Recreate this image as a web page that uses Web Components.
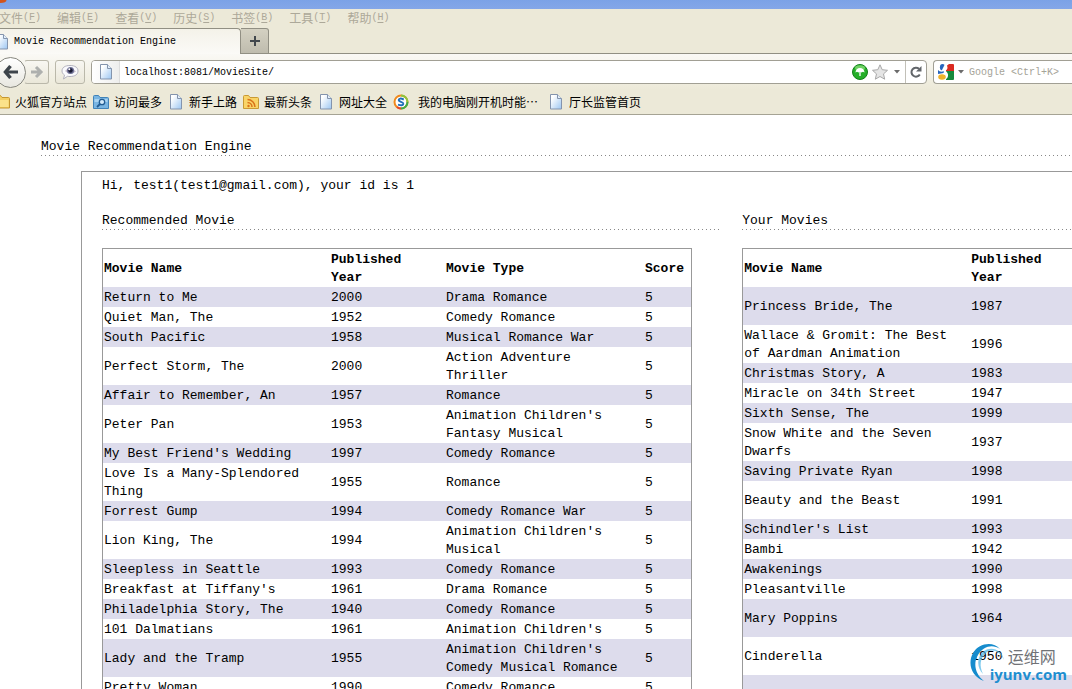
<!DOCTYPE html>
<html lang="zh-CN">
<head>
<meta charset="utf-8">
<title>Movie Recommendation Engine</title>
<style>
  html, body { margin: 0; height: 100%; }
  body {
    overflow: hidden; background: #fff; color: #000;
    font: 13px/18px "Liberation Mono", "Noto Sans CJK SC", monospace;
  }
</style>
</head>
<body>
<app-window></app-window>
<script>
const ICONS = {
  page: `<svg width="16" height="16" viewBox="0 0 16 16"><defs><linearGradient id="g" x1="0" y1="0" x2="1" y2="1"><stop offset=".2" stop-color="#fff"/><stop offset="1" stop-color="#9cc6f2"/></linearGradient></defs><path d="M2.500 .5h7l4 4v10.500h-11z" fill="url(#g)" stroke="#8494ad"/><path d="M9.500 .5v4h4" fill="#e4effb" stroke="#8494ad"/></svg>`,
  folder: `<svg width="16" height="16" viewBox="0 0 16 16"><path d="M.5 14V2.500q0-1 1-1h5l1.500 2h6.500q1 0 1 1v9.500z" fill="#f4cf62" stroke="#c59630"/><path d="M1.500 6h13v7h-13z" fill="#fbe28a"/></svg>`,
  search: `<svg width="16" height="16" viewBox="0 0 16 16"><path d="M.5 14.500V2.500q0-1 1-1h4l1.500 2h7.500q1 0 1 1v10z" fill="#79b5e2" stroke="#4183b8"/><path d="M1.500 5h13v3h-13z" fill="#a8d3f2"/><circle cx="9" cy="8" r="2.700" fill="#d4ebfb" stroke="#225d93" stroke-width="1.300"/><path d="M7 10l-3 3" stroke="#225d93" stroke-width="1.800"/></svg>`,
  feed: `<svg width="16" height="16" viewBox="0 0 16 16"><path d="M.5 14.500V2.500q0-1 1-1h4l1.500 2h7.500q1 0 1 1v10z" fill="#f9d468" stroke="#c99a34"/><circle cx="5.500" cy="12" r="1.200" fill="#d9731a"/><path d="M4.500 8.500a4.500 4.500 0 0 1 4.500 4.500M4.500 5.500a7.500 7.500 0 0 1 7.500 7.500" fill="none" stroke="#d9731a" stroke-width="1.500"/></svg>`,
  sogou: `<svg width="16" height="16" viewBox="0 0 16 16" fill="none"><circle cx="8" cy="8" r="6.500" fill="#fff" stroke="#f08a1c" stroke-width="2"/><path d="M8 1.500A6.500 6.500 0 0 1 14.500 8" stroke="#8cc63e" stroke-width="2"/><path d="M14.500 8A6.500 6.500 0 0 1 8 14.500" stroke="#3fae49" stroke-width="2"/><path d="M4 13A6.500 6.500 0 0 0 8 14.500" stroke="#e2452c" stroke-width="2"/><path d="M10.800 5.500Q6 3.500 5.700 6C5.500 8 10.500 7.700 10.300 9.900Q10 12.300 5 10.600" stroke="#1f6fb8" stroke-width="2"/></svg>`,
  back: `<svg width="18" height="18" viewBox="0 0 18 18" fill="none" stroke="#3d444b"><path d="M8.500 3L3.500 9l5 6" stroke-width="3.500"/><path d="M4 9h12" stroke-width="3"/></svg>`,
  forward: `<svg width="14" height="16" viewBox="0 0 14 16" fill="none" stroke="#aeb0ae" stroke-width="3"><path d="M6 3l5 5-5 5M1 8h9"/></svg>`,
  eye: `<svg width="18" height="16" viewBox="0 0 18 16"><path d="M9 1.500c5 0 8 2 8 5.500s-3 5.500-8 5.500c-1 0-1.500 0-2.500-.2L2.500 15l1-4C2 10 1 8.800 1 7c0-3.500 3-5.500 8-5.500z" fill="#fafafd" stroke="#b3b2bd"/><path d="M4 7Q9 1 15 7.500 9 12 4 7z" fill="#c3bbc9"/><circle cx="9.500" cy="6.500" r="3.500" fill="#6d7096"/><circle cx="9.500" cy="6.500" r="2.200" fill="#1b1c34"/><circle cx="8.300" cy="5.200" r="1" fill="#fff"/></svg>`,
  umbrella: `<svg width="16" height="16" viewBox="0 0 16 16"><circle cx="8" cy="8" r="7.500" fill="#25ae28" stroke="#128018"/><ellipse cx="8" cy="4" rx="5" ry="2.800" fill="#8ee07e" opacity=".7"/><path d="M3.500 8.500a4.500 4.500 0 0 1 9 0l-1.500-.7-1.500.7L8 7.800l-1.500.7-1.500-.7z" fill="#fff"/><path d="M8 7v5" stroke="#fff" stroke-width="1.300"/></svg>`,
  star: `<svg width="16" height="16" viewBox="0 0 16 16"><path d="M8 .8l2.200 4.900 5.300.6-4 3.600 1.200 5.300L8 12.500l-4.700 2.700 1.200-5.300-4-3.600 5.300-.6z" fill="#e5e5e5" stroke="#a8a8a8"/></svg>`,
  caret: `<svg width="6" height="4" viewBox="0 0 6 4"><path d="M0 0h6L3 3.500z" fill="#6b6b6b"/></svg>`,
  reload: `<svg width="14" height="14" viewBox="0 0 14 14"><path d="M10 3.800A4.500 4.500 0 1 0 10.800 9.500" fill="none" stroke="#62666a" stroke-width="2"/><path d="M12.500 1v5.500H7z" fill="#62666a"/></svg>`,
  google: `<svg width="16" height="16" viewBox="0 0 16 16"><path d="M0 0h9v16H0z" fill="#fff"/><path d="M8 0h7q1 0 1 1v6H8z" fill="#da2a20"/><path d="M8 7h8v8q0 1-1 1H8z" fill="#168a3d"/><ellipse cx="4.500" cy="3.200" rx="2.600" ry="3.200" fill="#2765bd"/><path d="M7 0h4L9 1.500Q10.500 5 7.500 6.500L9.500 9q1.500 3-1 6L5 9.500 3 8z" fill="#fff"/><path d="M0 6q2 2.500 6 1.200L5.500 9 0 10z" fill="#2765bd"/><ellipse cx="4" cy="13" rx="3.800" ry="2.700" fill="#eeb32c"/></svg>`,
  plus: `<svg width="12" height="12" viewBox="0 0 12 12"><path d="M6 1v10M1 6h10" stroke="#41474c" stroke-width="2"/></svg>`,
  fox: `<svg width="7" height="9" viewBox="0 0 7 9"><path d="M0 0h6.500q0 3-6.500 3z" fill="#d2541c"/></svg>`
};

function define(name, render) {
  customElements.define(name, class extends HTMLElement {
    connectedCallback() {
      if (this.shadowRoot) return;
      const t = document.createElement('template');
      t.innerHTML = render(this);
      this.attachShadow({ mode: 'open' }).append(t.content.cloneNode(true));
    }
  });
}

define('ui-icon', el => `<style>:host{display:inline-flex;flex:none} svg{display:block}</style>${ICONS[el.getAttribute('name')]}`);

define('menu-bar', () => `
<style>
  :host { display: block; background: #ece9d8; height: 19px; }
  nav { display: flex; gap: 16px; margin-left: -1px; align-items: center; }
  button { display: flex; align-items: center; border: 0; padding: 0; background: none; color: #aca899; font: 12px/18px "Noto Sans CJK SC", sans-serif; white-space: nowrap; }
  span { font: 10px/18px "Liberation Mono", monospace; }
  u { text-underline-offset: 2px; }
</style>
<nav>${[['文件','F'],['编辑','E'],['查看','V'],['历史','S'],['书签','B'],['工具','T'],['帮助','H']]
  .map(([t, k]) => `<button>${t}<span>(<u>${k}</u>)</span></button>`).join('')}</nav>`);

define('tab-strip', () => `
<style>
  :host { display: flex; height: 26px; background: #ece9d8; }
  button { font: 10px/18px "Liberation Mono", monospace; color: #000; padding: 0; display: flex; align-items: center; }
  .tab { box-sizing: border-box; width: 241px; gap: 4px; padding-top: 1px; border: solid #918f83; border-width: 1px 1px 0 0; border-radius: 0 4px 0 0; background: linear-gradient(#f4f2e9, #fbfaf7); white-space: nowrap; }
  ui-icon { margin-left: -6px; }
  .add { box-sizing: border-box; width: 28px; justify-content: center; border: 1px solid #918f83; border-left: 0; border-radius: 0 3px 0 0; background: linear-gradient(#d4d1c2, #bfbcae); }
  .add ui-icon { margin: 0; }
  .rest { flex: 1; border-bottom: 1px solid #918f83; }
</style>
<button class="tab"><ui-icon name="page"></ui-icon>Movie Recommendation Engine</button>
<button class="add" aria-label="New tab"><ui-icon name="plus"></ui-icon></button>
<div class="rest"></div>`);

define('nav-bar', () => `
<style>
  :host { display: flex; align-items: center; height: 36px; background: linear-gradient(#faf9f5, #ece9d8); }
  button { padding: 0; display: flex; align-items: center; justify-content: center; border: 0; background: none; flex: none; }
  .back { box-sizing: border-box; width: 31px; height: 31px; margin-left: -5px; border: 1px solid #87877f; border-radius: 50%; background: linear-gradient(#fff, #e8e7e0); position: relative; }
  .fwd, .eye { box-sizing: border-box; height: 24px; border: 1px solid #bab8aa; border-radius: 3px; background: linear-gradient(#f8f7f2, #eae7d9); margin-right: 6px; }
  .fwd { width: 25px; margin-left: -2px; border-left-color: transparent; }
  .eye { width: 30px; }
  .url, .find { box-sizing: border-box; height: 24px; border: 1px solid #a19f94; background: #fff; display: flex; align-items: center; border-radius: 4px; overflow: hidden; }
  .url { flex: 1; min-width: 0; margin-right: 6px; }
  .site { width: 28px; height: 100%; background: linear-gradient(90deg, #fff, #eeeeed); border-right: 1px solid #ddd; }
  input { border: 0; outline: 0; padding: 1px 0 0; background: none; min-width: 0; flex: 1; font: 10px/18px "Liberation Mono", monospace; color: #000; }
  .url input { margin-left: 4px; }
  .drop { margin: 0 5px 0 6px; }
  .find .drop { margin: 0 5px 0 4px; }
  .star { margin-left: 4px; }
  .reload { width: 21px; height: 100%; border-left: 1px solid #c2c0b8; }
  .find { width: 139px; border-right: 0; border-radius: 4px 0 0 4px; padding-left: 4px; }
  input::placeholder { color: #a5a398; opacity: 1; }
</style>
<button class="back" aria-label="Back"><ui-icon name="back"></ui-icon></button>
<button class="fwd" aria-label="Forward"><ui-icon name="forward"></ui-icon></button>
<button class="eye" aria-label="Preview"><ui-icon name="eye"></ui-icon></button>
<div class="url">
  <button class="site" aria-label="Site information"><ui-icon name="page"></ui-icon></button>
  <input aria-label="Address" value="localhost:8081/MovieSite/">
  <ui-icon name="umbrella"></ui-icon>
  <button class="star" aria-label="Bookmark"><ui-icon name="star"></ui-icon></button>
  <button class="drop" aria-label="History"><ui-icon name="caret"></ui-icon></button>
  <button class="reload" aria-label="Reload"><ui-icon name="reload"></ui-icon></button>
</div>
<div class="find">
  <ui-icon name="google"></ui-icon>
  <button class="drop" aria-label="Search engine"><ui-icon name="caret"></ui-icon></button>
  <input aria-label="Search" placeholder="Google &lt;Ctrl+K&gt;">
</div>`);

define('bookmark-bar', () => `
<style>
  :host { display: block; background: #ece9d8; border-bottom: 1px solid #a5a394; }
  nav { display: flex; gap: 6px; align-items: center; height: 24px; margin-left: -6px; }
  a { display: flex; gap: 5px; align-items: center; color: #000; text-decoration: none; white-space: nowrap; font: 12px/18px "Noto Sans CJK SC", sans-serif; }
  .spaced span { padding: 0 4px; }
</style>
<nav>${[['folder','火狐官方站点'],['search','访问最多'],['page','新手上路'],['feed','最新头条'],['page','网址大全'],['sogou','我的电脑刚开机时能⋯'],['page','厅长监管首页']]
  .map(([i, t]) => `<a href="#"${i === 'sogou' ? ' class="spaced"' : ''}><ui-icon name="${i}"></ui-icon><span>${t}</span></a>`).join('')}</nav>`);

define('section-title', () => `
<style>
  :host { display: block; }
  h2 { margin: 0; font: inherit; background: repeating-linear-gradient(90deg, #888 0 1px, transparent 1px 4px) bottom / 100% 1px no-repeat; }
</style><h2><slot></slot></h2>`);

const LISTS = {
  recommended: [
    ['Return to Me', 2000, 'Drama Romance'],
    ['Quiet Man, The', 1952, 'Comedy Romance'],
    ['South Pacific', 1958, 'Musical Romance War'],
    ['Perfect Storm, The', 2000, 'Action Adventure Thriller'],
    ['Affair to Remember, An', 1957, 'Romance'],
    ['Peter Pan', 1953, "Animation Children's Fantasy Musical"],
    ["My Best Friend's Wedding", 1997, 'Comedy Romance'],
    ['Love Is a Many-Splendored Thing', 1955, 'Romance'],
    ['Forrest Gump', 1994, 'Comedy Romance War'],
    ['Lion King, The', 1994, "Animation Children's Musical"],
    ['Sleepless in Seattle', 1993, 'Comedy Romance'],
    ["Breakfast at Tiffany's", 1961, 'Drama Romance'],
    ['Philadelphia Story, The', 1940, 'Comedy Romance'],
    ['101 Dalmatians', 1961, "Animation Children's"],
    ['Lady and the Tramp', 1955, "Animation Children's Comedy Musical Romance"],
    ['Pretty Woman', 1990, 'Comedy Romance']
  ],
  // A third value of true marks a row of two lines' height.
  yours: [
    ['Princess Bride, The', 1987, true],
    ['Wallace & Gromit: The Best of Aardman Animation', 1996],
    ['Christmas Story, A', 1983],
    ['Miracle on 34th Street', 1947],
    ['Sixth Sense, The', 1999],
    ['Snow White and the Seven Dwarfs', 1937],
    ['Saving Private Ryan', 1998],
    ['Beauty and the Beast', 1991, true],
    ["Schindler's List", 1993],
    ['Bambi', 1942],
    ['Awakenings', 1990],
    ['Pleasantville', 1998],
    ['Mary Poppins', 1964, true],
    ['Cinderella', 1950, true],
    ['', '', true]
  ]
};

define('movie-table', el => {
  const full = el.getAttribute('list') === 'recommended';
  const esc = s => String(s).replace('&', '&amp;');
  const rows = LISTS[el.getAttribute('list')].map(([name, year, extra]) => full
    ? `<tr><td>${esc(name)}</td><td>${year}</td><td>${extra}</td><td>5</td></tr>`
    : `<tr${extra ? ' class="tall"' : ''}><td>${esc(name)}</td><td>${year}</td><td></td></tr>`).join('');
  return `
<style>
  :host { display: block; }
  table { width: 590px; box-sizing: border-box; table-layout: fixed; border: 1px solid #999; border-spacing: 0; }
  .name { width: 227px; } .year { width: 115px; } .type { width: 199px; }
  th, td { text-align: left; vertical-align: middle; padding: 2px 8px 0 1px; }
  th:last-child, td:last-child { padding-right: 1px; }
  .tall { height: 38px; }
  tbody tr:nth-child(odd) { background: #dddcec; }
</style>
<table>
  <colgroup><col class="name"><col class="year">${full ? '<col class="type"><col>' : '<col>'}</colgroup>
  <thead><tr><th>Movie Name</th><th>Published Year</th>${full ? '<th>Movie Type</th><th>Score</th>' : '<th></th>'}</tr></thead>
  <tbody>${rows}</tbody>
</table>`;
});

define('site-mark', () => `
<style>
  :host { display: flex; position: absolute; right: 5px; bottom: 4px; align-items: center; }
  svg { display: block; margin-right: -16px; }
  div { display: flex; flex-direction: column; gap: 1px; }
  .cn { font: 16px/18px "Noto Sans CJK SC", sans-serif; color: #707276; padding-left: 18px; }
  .en { font: bold 15px/16px "Open Sans", sans-serif; color: #1f8fd0; }
</style>
<svg width="38" height="42" viewBox="0 0 38 42" fill="none">
  <path d="M32 6C25-2 11 0 5 10c-6 11-1 24 11 28C7 31 5 20 10 12 15 3 25 1 32 6z" fill="#168ccd"/>
  <path d="M36 17C34 7 24 3 16 8c-8 6-7 17-1 23C11 23 12 15 18 10c6-5 14-2 18 7z" fill="#49b4e6" opacity=".7"/>
</svg>
<div><span class="cn">运维网</span><span class="en">iyunv.com</span></div>`);

define('movie-page', () => `
<style>
  :host { display: block; position: relative; flex: 1; min-height: 0; overflow: hidden; }
  main { padding: 23px 0 0 41px; }
  .box { margin: 15px 0 0 40px; border: solid #999; border-width: 1px 0 0 1px; padding: 5px 0 0 20px; }
  p { margin: 0 0 17px; }
  .cols { display: grid; grid-template-columns: 15fr 8fr; gap: 22px; }
  .cols > section { min-width: 0; }
  .clip { overflow: hidden; }
  movie-table { margin-top: 18px; }
</style>
<main>
  <section-title>Movie Recommendation Engine</section-title>
  <div class="box">
    <p>Hi, test1(test1@gmail.com), your id is 1</p>
    <div class="cols">
      <section><section-title>Recommended Movie</section-title><movie-table list="recommended"></movie-table></section>
      <section class="clip"><section-title>Your Movies</section-title><movie-table list="yours"></movie-table></section>
    </div>
  </div>
</main>
<site-mark></site-mark>`);

define('app-window', () => `
<style>
  :host { display: flex; flex-direction: column; height: 100vh; }
  .title { display: flex; height: 9px; background: linear-gradient(#7ba2e7, #84a7e8); flex: none; }
  menu-bar, tab-strip, nav-bar, bookmark-bar { flex: none; }
</style>
<div class="title"><ui-icon name="fox"></ui-icon></div>
<menu-bar></menu-bar>
<tab-strip></tab-strip>
<nav-bar></nav-bar>
<bookmark-bar></bookmark-bar>
<movie-page></movie-page>`);
</script>
</body>
</html>
